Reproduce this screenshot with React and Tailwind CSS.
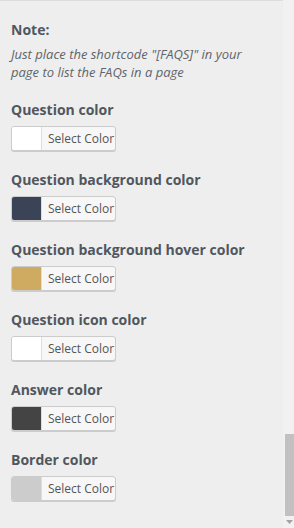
const fields = [
  { label: 'Question color', color: '#ffffff' },
  { label: 'Question background color', color: '#3b4357' },
  { label: 'Question background hover color', color: '#cfab62' },
  { label: 'Question icon color', color: '#ffffff' },
  { label: 'Answer color', color: '#444444' },
  { label: 'Border color', color: '#cccccc' },
];

function ColorButton({ color }) {
  return (
    <button
      type="button"
      className="flex h-[25px] w-[105px] items-stretch overflow-hidden rounded-[3px] border border-[#cccccc] bg-[#f7f7f7] shadow-[0_1px_0_#cccccc] text-left"
    >
      <span className="w-[30px] shrink-0 border-r border-[#dddddd]" style={{ backgroundColor: color }} />
      <span className="flex flex-1 items-center pl-[6px] text-[12px] text-[#555555]">Select Color</span>
    </button>
  );
}

export default function App() {
  return (
    <div className="flex h-[528px] w-[294px] overflow-hidden bg-[#eeeeee] font-['Open_Sans',sans-serif]">
      <div className="flex-1 border-t border-[#dddddd] pl-[11px] pt-[20px]">
        <h3 className="text-[14px] font-bold leading-[18px] text-[#50575e]">Note:</h3>
        <p className="mt-[6px] max-w-[255px] text-[13px] italic leading-[18px] text-[#5f6469]">
          Just place the shortcode "[FAQS]" in your page to list the FAQs in a page
        </p>
        <div className="mt-[20px] flex flex-col gap-[20px]">
          {fields.map((f) => (
            <div key={f.label}>
              <h3 className="text-[14px] font-bold leading-[18px] text-[#50575e]">{f.label}</h3>
              <div className="mt-[7px]">
                <ColorButton color={f.color} />
              </div>
            </div>
          ))}
        </div>
      </div>
      <div className="flex w-[11px] flex-col bg-[#f1f1f1] pl-[2px]">
        <div className="mt-[434px] h-[82px] bg-[#c1c1c1]" />
        <div className="mt-[4px] flex justify-center">
          <svg width="7" height="4" viewBox="0 0 7 4">
            <path d="M0 0h7L3.5 4z" fill="#a3a3a3" />
          </svg>
        </div>
      </div>
    </div>
  );
}
